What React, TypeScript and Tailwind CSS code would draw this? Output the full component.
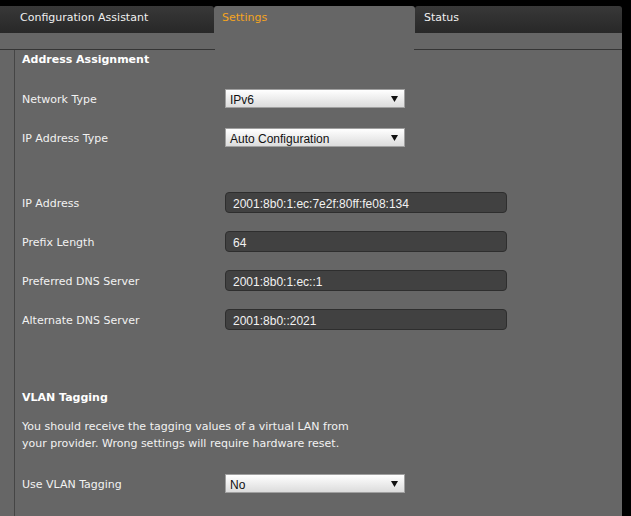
import React from "react";

const labelFont = { fontFamily: '"DejaVu Sans", Verdana, sans-serif' };

function Select({ value }: { value: string }) {
  return (
    <div className="flex h-[19px] w-[180px] items-center justify-between border border-[#a0a0a0] bg-gradient-to-b from-[#ffffff] to-[#dcdcdc] pl-[4px] pr-[6px] font-['Liberation_Sans',Arial,sans-serif] text-[12px] text-[#111]">
      <span className="pt-[2px] leading-[14px]">{value}</span>
      <svg width="7" height="6" viewBox="0 0 7 6">
        <path d="M0 0 H7 L3.5 6 Z" fill="#111" />
      </svg>
    </div>
  );
}

function Input({ value }: { value: string }) {
  return (
    <div className="flex h-[21px] w-[282px] items-center rounded-[4px] border border-[#2e2e2e] bg-[#414141] pl-[7px] pt-[2px] font-['Liberation_Sans',Arial,sans-serif] text-[12px] leading-[14px] text-[#f2f2f2]">
      {value}
    </div>
  );
}

function Row({ label, children, mt }: { label: string; children: React.ReactNode; mt: string }) {
  return (
    <div className={`flex items-center ${mt}`}>
      <div className="w-[203px] pt-[3px] text-[11px] leading-[16px] text-[#f2f2f2]" style={labelFont}>
        {label}
      </div>
      {children}
    </div>
  );
}

export default function App() {
  return (
    <div className="flex h-[516px] w-[631px] overflow-hidden bg-black" style={labelFont}>
      <div className="flex w-[622px] flex-col">
        <div className="h-[6px] shrink-0" />
        <div className="flex h-[27px] shrink-0 text-[11px] leading-[24px]">
          <div className="w-[214px] rounded-tr-[3px] bg-gradient-to-b from-[#383838] to-[#282828] pl-[20px] text-[#f0f0f0]">
            Configuration Assistant
          </div>
          <div className="w-[201px] rounded-t-[3px] bg-[#666666] pl-[8px] text-[#f5a41e]">Settings</div>
          <div className="flex-1 rounded-t-[3px] bg-gradient-to-b from-[#383838] to-[#282828] pl-[9px] text-[#f0f0f0]">
            Status
          </div>
        </div>
        <div className="h-[16px] shrink-0 bg-[#666666]" />
        <div className="flex h-px shrink-0">
          <div className="w-[215px] bg-[#353535]" />
          <div className="w-[199px] bg-[#666666]" />
          <div className="flex-1 bg-[#353535]" />
        </div>
        <div className="flex flex-1 bg-[#666666]">
          <div className="w-[14px]" />
          <div className="w-px bg-[#454545]" />
          <div className="flex flex-col pl-[7px]">
            <div className="pt-[1px] text-[11px] font-bold leading-[18px] text-white">Address Assignment</div>
            <Row label="Network Type" mt="mt-[20px]">
              <Select value="IPv6" />
            </Row>
            <Row label="IP Address Type" mt="mt-[20px]">
              <Select value="Auto Configuration" />
            </Row>
            <Row label="IP Address" mt="mt-[45px]">
              <Input value="2001:8b0:1:ec:7e2f:80ff:fe08:134" />
            </Row>
            <Row label="Prefix Length" mt="mt-[18px]">
              <Input value="64" />
            </Row>
            <Row label="Preferred DNS Server" mt="mt-[18px]">
              <Input value="2001:8b0:1:ec::1" />
            </Row>
            <Row label="Alternate DNS Server" mt="mt-[18px]">
              <Input value="2001:8b0::2021" />
            </Row>
            <div className="mt-[58px] pt-[1px] text-[11px] font-bold leading-[18px] text-white">VLAN Tagging</div>
            <div className="mt-[11px] text-[11px] leading-[17px] text-[#f2f2f2]">
              You should receive the tagging values of a virtual LAN from
              <br />
              your provider. Wrong settings will require hardware reset.
            </div>
            <Row label="Use VLAN Tagging" mt="mt-[22px]">
              <Select value="No" />
            </Row>
          </div>
        </div>
      </div>
    </div>
  );
}
